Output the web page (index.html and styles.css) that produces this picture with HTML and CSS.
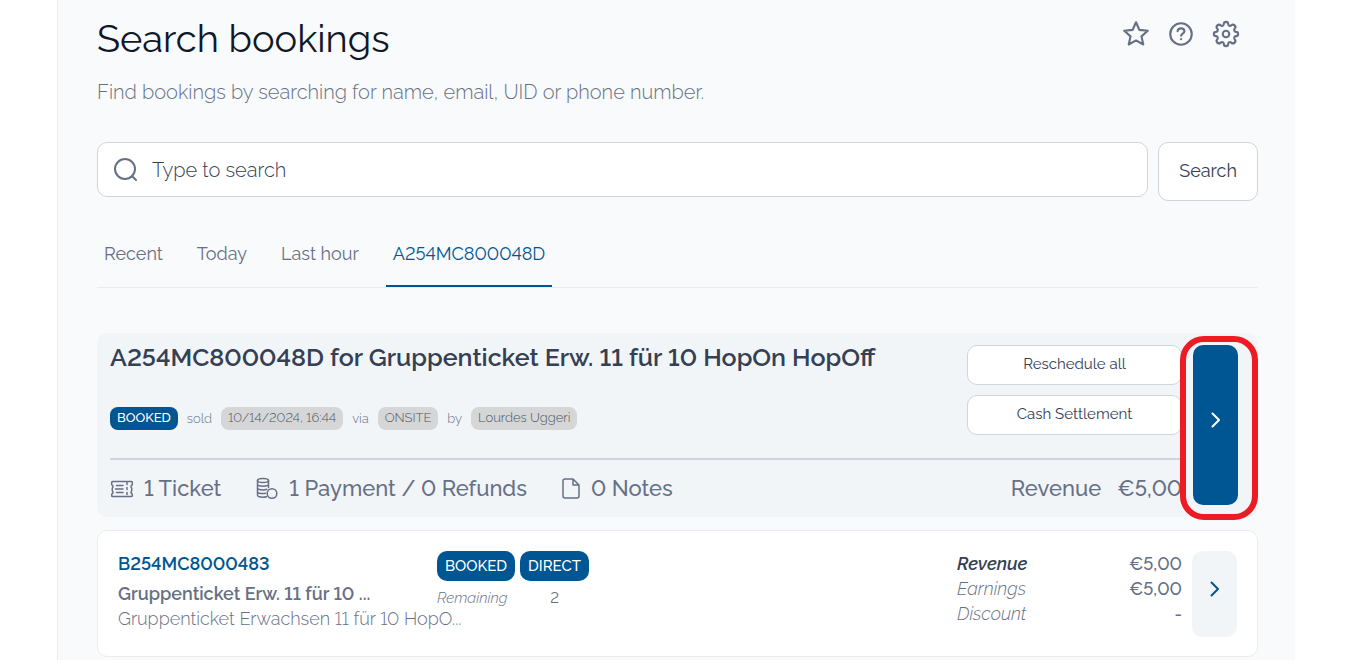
FILE: index.html
```html
<!DOCTYPE html>
<html lang="en">
  <head>
    <meta charset="utf-8">
    <title>Search bookings</title>
    <link rel="stylesheet" href="styles.css">
  </head>
  <body>
    <main class="page">
      <header class="page-header">
        <div>
          <h1>Search bookings</h1>
          <p>Find bookings by searching for name, email, UID or phone number.</p>
        </div>
        <nav class="tools">
          <a href="#favourites" aria-label="Favourites">
            <svg class="icon" width="30" height="30" viewBox="0 0 24 24"><path d="M12 2.600l2.700 6.100 6.700.7-5 4.500 1.400 6.500-5.800-3.300-5.800 3.300 1.400-6.500-5-4.500 6.700-.7z"/></svg>
          </a>
          <a href="#help" aria-label="Help">
            <svg class="icon" width="30" height="30" viewBox="0 0 24 24"><circle cx="12" cy="12" r="8.600"/><path d="M9.300 9.700c.2-1.400 1.300-2.200 2.700-2.200s2.700.9 2.700 2.300c0 1.800-2.500 1.900-2.600 3.600M12 16.100v.1"/></svg>
          </a>
          <a href="#settings" aria-label="Settings">
            <svg class="icon" width="30" height="30" viewBox="0 0 24 24"><circle cx="12" cy="12" r="2.600"/><path d="M10.300 4a1.700 1.700 0 0 1 3.400 0c.1 1.300 1.500 1.900 2.500 1.100a1.700 1.700 0 0 1 2.700 2.700c-.8 1-.2 2.400 1.100 2.500a1.700 1.700 0 0 1 0 3.400c-1.300.1-1.900 1.500-1.100 2.500a1.700 1.700 0 0 1-2.700 2.700c-1-.8-2.400-.2-2.500 1.100a1.700 1.700 0 0 1-3.400 0c-.1-1.300-1.500-1.900-2.500-1.100a1.700 1.700 0 0 1-2.700-2.700c.8-1 .2-2.400-1.100-2.500a1.700 1.700 0 0 1 0-3.400c1.300-.1 1.900-1.500 1.100-2.500a1.700 1.700 0 0 1 2.700-2.700c1 .8 2.400.2 2.500-1.100z"/></svg>
          </a>
        </nav>
      </header>

      <form class="search">
        <label class="search-box">
          <svg class="icon" width="28" height="28" viewBox="0 0 28 28"><circle cx="13" cy="13" r="10"/><path d="M20 20l4 4"/></svg>
          <input type="text" placeholder="Type to search" aria-label="Search bookings">
        </label>
        <button type="submit">Search</button>
      </form>

      <nav class="tabs">
        <a href="#recent">Recent</a>
        <a href="#today">Today</a>
        <a href="#last-hour">Last hour</a>
        <a href="#booking" class="active">A254MC800048D</a>
      </nav>

      <section class="booking">
        <div class="booking-main">
          <div class="booking-top">
            <div>
              <h2>A254MC800048D for Gruppenticket Erw. 11 für 10 HopOn HopOff</h2>
              <div class="sale">
                <span class="tag primary">BOOKED</span> sold
                <span class="tag">10/14/2024, 16:44</span> via
                <span class="tag">ONSITE</span> by
                <span class="tag">Lourdes Uggeri</span>
              </div>
            </div>
            <div class="actions">
              <button>Reschedule all</button>
              <button>Cash Settlement</button>
            </div>
          </div>
          <div class="summary">
            <span>
              <svg class="icon small" width="24" height="24" viewBox="0 0 24 24"><path d="M2.500 5.500h19a.8.8 0 0 1 .8.8v2.500c-1.600.6-1.600 2.400-.6 3.200v3c-1 .8-1 2.600.6 3.200v1.500a.8.8 0 0 1-.8.8h-19a.8.8 0 0 1-.8-.8v-1.500c1.600-.6 1.600-2.400.6-3.200v-3c1-.8 1-2.600-.6-3.200V6.300a.8.8 0 0 1 .8-.8zM6.500 9.500h6.500M5.500 13h7.500M6.500 16.500h6.500"/><path d="M17 6.500v13" stroke-dasharray="2 3"/></svg>
              1 Ticket
            </span>
            <span>
              <svg class="icon small" width="24" height="24" viewBox="0 0 24 24"><ellipse cx="8" cy="4.500" rx="5.500" ry="2"/><path d="M2.500 4.500v14.500c0 1.300 2.400 2.200 5.500 2.200 1.400 0 2.600-.2 3.500-.5M13.500 4.500v7M2.500 8.100c0 1.300 2.400 2.200 5.500 2.200s5.500-.9 5.500-2.200M2.500 11.700c0 1.300 2.400 2.200 5.500 2.200 1.500 0 2.800-.2 3.800-.6M2.500 15.400c0 1.300 2.400 2.200 5.500 2.200 1 0 1.800-.1 2.500-.3"/><circle cx="17" cy="17.500" r="4.800"/></svg>
              1 Payment / 0 Refunds
            </span>
            <span>
              <svg class="icon small" width="20" height="24" viewBox="2 0 20 24"><path d="M14 3H6a2 2 0 0 0-2 2v15a2 2 0 0 0 2 2h12a2 2 0 0 0 2-2V9zM14 3v6h6"/></svg>
              0 Notes
            </span>
            <span class="total">Revenue <b>€5,00</b></span>
          </div>
        </div>
        <div class="open-marked">
          <button class="open" aria-label="Open booking">
            <svg width="20" height="20" viewBox="0 0 20 20"><path d="M6.500 3.500L13 10l-6.500 6.500"/></svg>
          </button>
        </div>
      </section>

      <section class="ticket">
        <div class="product">
          <a href="#ticket">B254MC8000483</a>
          <strong>Gruppenticket Erw. 11 für 10 ...</strong>
          <span>Gruppenticket Erwachsen 11 für 10 HopO...</span>
        </div>
        <div class="status">
          <span class="tag primary">BOOKED</span>
          <span class="tag primary">DIRECT</span>
          <em>Remaining</em>
          <span class="count">2</span>
        </div>
        <table class="amounts">
          <tr class="revenue"><th>Revenue</th><td>€5,00</td></tr>
          <tr><th>Earnings</th><td>€5,00</td></tr>
          <tr><th>Discount</th><td>-</td></tr>
        </table>
        <button class="open" aria-label="Open ticket">
          <svg width="20" height="20" viewBox="0 0 20 20"><path d="M6.500 3.500L13 10l-6.500 6.500"/></svg>
        </button>
      </section>
    </main>
  </body>
</html>
```
FILE: styles.css
```css
* {
  box-sizing: border-box;
}
body {
  margin: 0;
  font-family: Raleway, Lato, sans-serif;
  font-size: 18px;
  font-variant-numeric: lining-nums;
  line-height: 25px;
  color: #667085;
  background: #fff;
}
a {
  color: inherit;
  text-decoration: none;
}
button, input {
  font: inherit;
  color: #344054;
}
button {
  background: #fff;
  border: 1px solid #d0d5dd;
  border-radius: 10px;
}

.icon {
  display: block;
  flex: none;
  fill: none;
  stroke: #667085;
  stroke-width: 2;
  stroke-linecap: round;
  stroke-linejoin: round;
}
.icon.small {
  stroke-width: 1.5;
}

.page {
  min-height: 100vh;
  margin: 0 55px 0 57px;
  padding: 16px 37px 0 39px;
  border-left: 1px solid #eaecf0;
  background: #f9fafc;
}

.page-header {
  display: flex;
  justify-content: space-between;
}
h1 {
  margin: 0;
  font-size: 38px;
  font-weight: 400;
  line-height: 46px;
  color: #101828;
}
.page-header p {
  margin: 16px 0 0;
  font-size: 20px;
  font-weight: 300;
  line-height: 28px;
}
.tools {
  display: flex;
  gap: 15px;
  padding: 3px 17px 0 0;
}
.tools .icon {
  stroke-width: 1.7;
}

.search {
  display: flex;
  align-items: flex-start;
  gap: 10px;
  margin-top: 36px;
}
.search-box {
  flex: 1;
  display: flex;
  align-items: center;
  gap: 12px;
  height: 55px;
  padding: 0 14px;
  background: #fff;
  border: 1px solid #d0d5dd;
  border-radius: 10px;
}
.search-box input {
  flex: 1;
  padding: 2px 0 0;
  border: 0;
  outline: 0;
  background: none;
  font-size: 20px;
  font-weight: 300;
}
.search-box input::placeholder {
  color: #344054;
}
.search button {
  padding: 15px 20px 17px;
}

.tabs {
  display: flex;
  gap: 20px;
  margin-top: 40px;
  border-bottom: 1px solid #eaecf0;
}
.tabs a {
  padding: 0 7px 19px;
  border-bottom: 2px solid transparent;
}
.tabs .active {
  color: #005693;
  border-color: #005693;
}

.booking {
  display: flex;
  gap: 11px;
  margin-top: 45px;
  padding: 12px 20px 12px 13px;
  background: #f2f5f8;
  border-radius: 10px;
}
.booking-main {
  flex: 1;
}
.booking-top {
  display: flex;
  justify-content: space-between;
  padding-bottom: 23px;
  border-bottom: 2px solid #d0d5dd;
}
h2 {
  margin: 0;
  font-size: 25px;
  font-weight: 600;
  line-height: 25px;
  color: #344054;
}
.sale {
  display: flex;
  align-items: center;
  gap: 9px;
  margin-top: 37px;
  font-size: 13px;
  font-weight: 300;
  line-height: 21px;
}
.tag {
  padding: 0 7px 2px;
  border-radius: 8px;
  color: #475467;
  background: #d6d6d6;
}
.tag.primary {
  color: #fff;
  background: #005693;
  font-weight: 500;
}
.actions {
  flex: none;
  display: flex;
  flex-direction: column;
  gap: 10px;
  width: 215px;
}
.actions button {
  height: 40px;
  padding: 0 0 2px;
  font-size: 15px;
}
.summary {
  display: flex;
  gap: 34px;
  padding: 12px 0 1px;
  font-size: 22px;
  font-weight: 500;
  line-height: 32px;
}
.summary span {
  display: flex;
  align-items: center;
  gap: 10px;
}
.summary .total {
  gap: 16px;
  margin-left: auto;
}
.summary b {
  font-weight: 500;
}

.open {
  flex: none;
  display: flex;
  align-items: center;
  justify-content: center;
  width: 45px;
  padding: 0 0 10px;
  border: 0;
}
.open svg {
  fill: none;
  stroke: #005693;
  stroke-width: 2;
  stroke-linecap: round;
  stroke-linejoin: round;
}
.open-marked {
  position: relative;
  display: flex;
}
/* red marker drawn over the card, around the open button */
.open-marked::after {
  content: '';
  position: absolute;
  inset: -9px -20px -15px -13px;
  border: 6px solid #ed1c24;
  border-radius: 24px;
  pointer-events: none;
}
.open-marked .open {
  background: #005693;
}
.open-marked .open svg {
  stroke: #fff;
}

.ticket {
  display: flex;
  margin-top: 13px;
  padding: 20px 20px 19px;
  background: #fff;
  border: 1px solid #eaecf0;
  border-radius: 10px;
}
.product {
  display: flex;
  flex-direction: column;
  width: 319px;
  font-weight: 300;
  white-space: nowrap;
}
.product a {
  margin-bottom: 5px;
  font-weight: 600;
  color: #005693;
}
.product strong {
  font-weight: 600;
}
.status {
  display: grid;
  grid-template-columns: auto auto;
  gap: 5px;
  align-content: start;
  font-size: 15px;
}
.status .tag {
  padding: 0 8px;
  border-radius: 10px;
  line-height: 30px;
}
.status em {
  font-weight: 300;
}
.status .count {
  text-align: center;
}
.amounts {
  align-self: flex-start;
  width: 225px;
  margin: 0 10px 0 auto;
  border-collapse: collapse;
}
.amounts th, .amounts td {
  padding: 0;
}
.amounts th {
  font-style: italic;
  font-weight: 300;
  text-align: left;
}
.amounts .revenue th {
  font-weight: 600;
  color: #344054;
}
.amounts td {
  font-weight: 500;
  text-align: right;
}
.ticket .open {
  min-height: 86px;
  background: #f2f5f8;
}
```
